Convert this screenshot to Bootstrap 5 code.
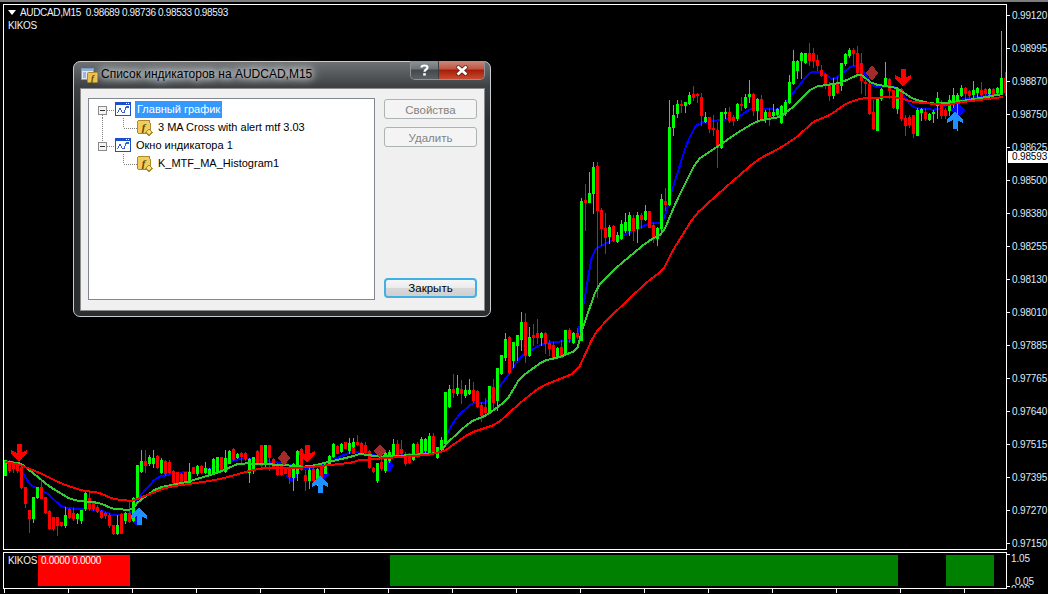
<!DOCTYPE html>
<html lang="ru">
<head>
  <meta charset="UTF-8" />
  <title>AUDCAD,M15</title>
  <link href="https://cdn.jsdelivr.net/npm/bootstrap@5.3.2/dist/css/bootstrap.min.css" rel="stylesheet" />
  <style>
    html, body { height: 594px; overflow: hidden; }
    body { background: #000; font-family: "Liberation Sans", Arial, sans-serif; font-size: 10px; line-height: 13px; letter-spacing: -0.15px; }

    .top-strip { height: 2px; background: #7d7d7d; }
    .terminal { padding: 2px 0 0 3px; }
    .price-pane { height: 546px; border: 1px solid #fff; position: relative; }
    .price-svg { display: block; width: 1002px; height: 544px; }
    .sub-pane { height: 37px; margin-top: 2px; border: 1px solid #fff; position: relative; padding: 2px 0; }
    .pane-col { width: 1004px; flex: none; }
    .axis-col { flex: 1 1 0; position: relative; color: #d8ecff; }
    .axis-main { height: 546px; padding: 5px 0 0; }
    .axis-sub { height: 37px; margin-top: 2px; overflow: hidden; position: relative; }
    .axis-row { height: 13px; }
    .axis-row::before { content: ""; width: 3px; height: 1px; background: #fff; margin-right: 2px; flex: none; }
    .sub-row-a::before { align-self: flex-start; margin-top: 2px; margin-right: 1px; }
    .sub-row-b { margin-top: 10px; }
    .sub-row-b::before { align-self: flex-start; margin-top: 11px; margin-right: 5px; }
    .price-tag { position: absolute; left: 1px; top: 147px; width: 41px; height: 12px; background: #fff; color: #000; padding-left: 4px; line-height: 12px; }
    .axis-ghost { position: absolute; left: 4px; top: 31px; height: 5px; overflow: hidden; line-height: 13px; }

    .pane-legend { position: absolute; left: 4px; top: 1px; color: #e6f2ff; line-height: 13px; letter-spacing: -0.35px; }
    .legend-row { height: 13px; }
    .legend-text { white-space: pre; }
    .legend-tri { width: 0; height: 0; border-left: 4px solid transparent; border-right: 4px solid transparent; border-top: 5px solid #fff; margin-right: 4px; }
    .sub-legend { position: absolute; left: 4px; top: 1px; color: #e6f2ff; white-space: nowrap; letter-spacing: -0.3px; }
    .sub-legend-name { display: inline-block; width: 33px; }
    .sub-legend-vals { color: #fff; }

    .hist-gap-a { width: 34px; }
    .hist-gap-b { width: 260px; }
    .hist-gap-c { width: 48px; }
    .hist-red { width: 92px; background: #f00; }
    .hist-green-a { width: 508px; background: #008000; }
    .hist-green-b { width: 48px; background: #008000; }

    .time-axis { padding-left: 1px; height: 4px; }
    .time-tick { width: 1px; height: 4px; background: #fff; margin-right: 63px; flex: none; }

    .mt-dialog { position: absolute; left: 73px; top: 61px; width: 418px; height: 256px; border: 1px solid #c9cdd0; border-radius: 7px; background: linear-gradient(to bottom, #6d7174 0, #3e4245 24px, #2b2e30 60px, #2b2e30 100%); padding: 0 5px 5px 6px; box-shadow: 0 0 0 1px #000; letter-spacing: 0; }
    .dlg-title { height: 26px; }
    .dlg-title-icon { width: 17px; height: 16px; margin: 5px 3px 0 1px; flex: none; }
    .dlg-title-text { font-size: 12px; line-height: 24px; color: #000; text-shadow: 0 0 6px #fff, 0 0 10px #fff, 0 0 14px rgba(255,255,255,.9); white-space: nowrap; }
    .win-btns { height: 19px; border: 1px solid #8f9396; border-top: 0; border-radius: 0 0 5px 5px; overflow: hidden; width: 75px; margin-top: -1px; flex: none; }
    .win-help { width: 28px; background: linear-gradient(to bottom, #8e9498 0, #6d7277 45%, #43484c 50%, #5a6064 100%); border-right: 1px solid #3d3d3d; }
    .win-close { flex: 1 1 0; background: linear-gradient(to bottom, #c98a7c 0, #bf5440 45%, #a51c08 50%, #c94a30 100%); }
    .dlg-client { height: 223px; background: #f0f0f0; border: 1px solid #8c8c8c; padding: 9px 7px 11px; }
    .tree-box { width: 287px; height: 202px; background: #fff; border: 1px solid #828790; padding-top: 1px; font-size: 11px; color: #000; flex: none; }
    .tree-line { height: 18px; }
    .tree-svg { flex: none; display: block; height: 18px; }
    .tree-sel { background: #3399ff; color: #fff; padding: 0 2px; line-height: 17px; height: 17px; }
    .tree-lbl { padding: 0 1px; white-space: nowrap; }
    .dlg-side { width: 93px; margin-left: 9px; margin-top: 1px; height: 199px; }
    .dlg-btn { display: block; width: 93px; height: 20px; padding: 1px 0 0; font-size: 11.5px; line-height: 16px; border-radius: 3px; border: 1px solid #adb2b5; background: #f4f4f4; color: #838383; }
    .dlg-btn:disabled { border-color: #adb2b5; background: #f4f4f4; color: #838383; opacity: 1; }
    .dlg-btn-main { color: #000; border: 2px solid #41b0e4; border-radius: 4px; padding-top: 0; background: linear-gradient(to bottom, #f6f6f6 0, #ebebeb 48%, #d8d8d8 52%, #cfcfcf 100%); }
    .dlg-btn-main:hover { color: #000; border-color: #41b0e4; }
  </style>
</head>
<body class="m-0">
  <div class="top-strip"></div>
  <div class="terminal">
    <div class="d-flex">
      <div class="pane-col">
        <div class="price-pane">
          <svg class="price-svg" id="priceChart" viewBox="4 5 1002 544" shape-rendering="crispEdges"></svg>
          <div class="pane-legend">
            <div class="legend-row d-flex align-items-center"><span class="legend-tri"></span><span class="legend-text">AUDCAD,M15  0.98689 0.98736 0.98533 0.98593</span></div>
            <div class="legend-row">KIKOS</div>
          </div>
        </div>
        <div class="sub-pane d-flex">
          <div class="hist-gap-a"></div>
          <div class="hist-red"></div>
          <div class="hist-gap-b"></div>
          <div class="hist-green-a"></div>
          <div class="hist-gap-c"></div>
          <div class="hist-green-b"></div>
          <div class="sub-legend"><span class="sub-legend-name">KIKOS</span><span class="sub-legend-vals">0.0000 0.0000</span></div>
        </div>
        <div class="time-axis d-flex" id="timeAxis"></div>
      </div>
      <div class="axis-col">
        <div class="axis-main d-flex flex-column justify-content-between" id="priceAxis"></div>
        <div class="price-tag">0.98593</div>
        <div class="axis-sub">
          <div class="axis-row sub-row-a d-flex align-items-center">1.05</div>
          <div class="axis-row sub-row-b d-flex align-items-center">0.05</div>
          <div class="axis-ghost">0.00</div>
        </div>
      </div>
    </div>
  </div>

  <svg width="0" height="0" class="position-absolute">
    <defs>
      <symbol id="icoChart" viewBox="0 0 16 14">
        <rect x="0.5" y="0.5" width="15" height="13" fill="#fff" stroke="#1c50c8"/>
        <rect x="0" y="0" width="16" height="3" fill="#1c50c8"/>
        <rect x="11" y="1" width="1" height="1" fill="#fff"/><rect x="13" y="1" width="1" height="1" fill="#fff"/>
        <path d="M2.5 11 L5 6 L7 10 L9 11 L11 5 L13.5 5" fill="none" stroke="#3060d0" stroke-width="1.2"/>
      </symbol>
      <symbol id="icoFunc" viewBox="0 0 16 16">
        <rect x="0.5" y="0.5" width="12.5" height="13" rx="2" fill="#f2cd5c" stroke="#a98a2c"/>
        <text x="6.6" y="10.5" text-anchor="middle" font-family="Liberation Serif, serif" font-style="italic" font-weight="700" font-size="11" fill="#5c4708">f</text>
        <path d="M12 9 L15.5 12.2 L12 15.5 L8.7 12.2 Z" fill="#f6dc84" stroke="#a98a2c"/>
      </symbol>
    </defs>
  </svg>

  <div class="mt-dialog d-flex flex-column">
    <div class="dlg-title d-flex">
      <svg class="dlg-title-icon" viewBox="0 0 17 16">
        <rect x="0.5" y="1.5" width="12" height="11" fill="#dfe8f4" stroke="#7f9cc4"/>
        <rect x="1" y="2" width="11" height="2" fill="#8fb0dc"/>
        <path d="M2 6h3M2 8h3M2 10h3" stroke="#6a86ac"/>
        <rect x="6.5" y="5.5" width="10" height="10" rx="1" fill="#eec04a" stroke="#a98a2c"/>
        <text x="11.5" y="13.5" text-anchor="middle" font-family="Liberation Serif, serif" font-style="italic" font-weight="700" font-size="9" fill="#5c4708">f</text>
      </svg>
      <div class="dlg-title-text">Список индикаторов на AUDCAD,M15</div>
      <div class="win-btns d-flex ms-auto">
        <div class="win-help d-flex align-items-center justify-content-center">
          <svg width="9" height="12" viewBox="0 0 9 12"><path d="M1.5 3.5 C1.5 0.8 7.5 0.8 7.5 3.5 C7.5 5.5 4.5 5.5 4.5 7.8" fill="none" stroke="#fff" stroke-width="2.2"/><rect x="3.2" y="9.2" width="2.6" height="2.4" fill="#fff"/></svg>
        </div>
        <div class="win-close d-flex align-items-center justify-content-center">
          <svg width="14" height="11" viewBox="0 0 14 11"><path d="M2 1 L12 10 M12 1 L2 10" stroke="#5a2018" stroke-width="4.2"/><path d="M2.5 1.5 L11.5 9.5 M11.5 1.5 L2.5 9.5" stroke="#fff" stroke-width="2.8"/></svg>
        </div>
      </div>
    </div>
    <div class="dlg-client d-flex">
      <ul class="tree-box list-unstyled mb-0">
        <li class="tree-line d-flex align-items-center">
          <svg class="tree-svg" width="46" viewBox="0 0 46 18" shape-rendering="crispEdges">
            <path d="M13.5 15V18M18 10.5H26" stroke="#808080" stroke-dasharray="1 1" fill="none"/>
            <rect x="9.5" y="6.5" width="8" height="8" fill="#f4f4f4" stroke="#8a8a8a"/><path d="M11 10.5H16" stroke="#333"/>
            <use href="#icoChart" x="26" y="2" width="16" height="14"/>
          </svg>
          <span class="tree-sel">Главный график</span>
        </li>
        <li class="tree-line d-flex align-items-center">
          <svg class="tree-svg" width="68" viewBox="0 0 68 18" shape-rendering="crispEdges">
            <path d="M13.5 0V18M34.5 0V10M35 10.5H48" stroke="#808080" stroke-dasharray="1 1" fill="none"/>
            <use href="#icoFunc" x="48" y="2" width="16" height="16"/>
          </svg>
          <span class="tree-lbl">3 MA Cross with alert mtf 3.03</span>
        </li>
        <li class="tree-line d-flex align-items-center">
          <svg class="tree-svg" width="46" viewBox="0 0 46 18" shape-rendering="crispEdges">
            <path d="M13.5 0V6M18 10.5H26" stroke="#808080" stroke-dasharray="1 1" fill="none"/>
            <rect x="9.5" y="6.5" width="8" height="8" fill="#f4f4f4" stroke="#8a8a8a"/><path d="M11 10.5H16" stroke="#333"/>
            <use href="#icoChart" x="26" y="2" width="16" height="14"/>
          </svg>
          <span class="tree-lbl">Окно индикатора 1</span>
        </li>
        <li class="tree-line d-flex align-items-center">
          <svg class="tree-svg" width="68" viewBox="0 0 68 18" shape-rendering="crispEdges">
            <path d="M34.5 0V10M35 10.5H48" stroke="#808080" stroke-dasharray="1 1" fill="none"/>
            <use href="#icoFunc" x="48" y="2" width="16" height="16"/>
          </svg>
          <span class="tree-lbl">K_MTF_MA_Histogram1</span>
        </li>
      </ul>
      <div class="dlg-side d-flex flex-column gap-2">
        <button type="button" class="btn dlg-btn" disabled>Свойства</button>
        <button type="button" class="btn dlg-btn" disabled>Удалить</button>
        <button type="button" class="btn dlg-btn dlg-btn-main mt-auto">Закрыть</button>
      </div>
    </div>
  </div>

  <script>
    // rows read off the chart: colour, wick top, body top, body bottom, wick bottom (zoomed y)
    const groups = [
      { x: 5, oy: 430, rows: "g 90 90 135 135|r 90 92 120 125|r 92 95 115 125|r 95 98 120 125|r 105 110 170 175|r 170 172 220 230|r 240 240 265 305|g 200 200 265 275|g 170 172 200 205|r 150 172 205 205|r 200 202 245 250|r 240 242 295 298|r 260 262 295 300|r 262 262 285 315|r 275 277 285 288|g 230 255 285 290|r 235 238 262 265|r 230 250 265 270|g 250 252 265 280|g 240 240 270 278|g 185 190 235 240|r 185 205 235 240|r 215 218 235 240|r 225 232 242 245|r 240 242 262 265|r 245 248 255 265|r 250 255 285 290|r 285 285 310 312|g 255 285 310 312|r 250 252 308 310|g 245 250 270 280|r 215 250 272 275|g 200 205 270 272|g 105 105 205 205|g 60 92 122 125|r 60 92 105 125|g 75 80 100 105|g 60 85 100 110|r 75 78 110 115|g 85 90 125 130|r 90 92 130 135|r 90 95 125 130|r 120 122 155 160|r 125 127 155 160|r 130 132 155 160|r 125 127 150 155|g 100 125 155 157|r 110 112 128 130|g 105 108 130 135|r 105 108 125 130|g 95 115 125 130|g 115 117 128 130|g 85 88 128 130|g 80 82 122 125|r 80 82 118 120|g 60 85 122 125|g 60 62 98 100|r 55 58 88 90|g 70 72 82 85|r 65 70 78 100|r 65 70 85 90|g 85 88 125 155|g 80 82 118 130|r 60 62 98 100|r 45 46 105 110|g 45 46 100 110|r 45 46 80 120|r 85 88 108 110|r 100 102 132 135|r 105 108 132 135|r 110 112 128 130|r 110 112 138 160|g 100 102 140 180|g 60 62 130 150|r 55 58 118 120|r 120 135 150 180|g 115 120 150 175|r 115 116 150 160|g 115 116 155 165|r 110 112 148 150|g 100 102 128 130|g 75 78 103 105|g 40 42 78 80|r 45 47 68 70|g 40 42 63 65|r 35 37 53 55|g 25 40 60 70|r 40 42 68 70" },
      { x: 353, oy: 300, rows: "g 415 425 437 440|r 405 425 432 435|r 425 428 455 460|r 425 435 455 460|r 450 452 500 505|r 500 503 512 515|g 488 490 540 545|r 460 485 505 510|g 455 460 510 515|g 450 455 480 485|g 418 432 462 465|r 420 432 465 470|r 420 448 460 465|r 455 462 490 495|r 460 465 485 490|g 430 432 478 480|r 425 432 468 470|g 410 418 458 460|g 415 418 450 455|g 400 408 458 460|r 398 408 460 462|g 440 442 470 475|g 410 420 448 450|g 275 275 430 435|g 255 268 318 320|r 222 268 275 290|g 225 265 280 285|r 240 268 280 310|g 255 270 285 290|g 238 270 280 282|r 245 270 300 305|r 270 272 318 320|r 305 315 345 362|r 295 320 335 345|g 258 258 335 337|r 238 262 305 330|g 205 205 300 330|g 165 165 220 222|g 100 118 170 180|r 108 110 215 220|g 125 127 180 200|g 105 105 135 180|g 35 65 118 150|r 40 65 165 185|g 80 110 165 167|r 72 105 112 135|r 58 100 112 130|g 95 98 110 135|r 95 98 130 160|r 120 130 145 165|r 125 135 170 172|g 140 143 172 175|r 120 140 170 172|g 90 90 160 165|r 85 90 115 125|g 95 98 125 130|r 85 98 108 115" },
      { x: 581, oy: 80, rows: "g 355 362 780 780|r 312 360 367 450|g 275 340 365 367|g 245 262 340 400|r 245 258 390 650|r 385 390 445 495|r 400 445 470 520|g 435 440 468 488|r 435 437 480 482|g 455 465 483 485|g 420 432 475 478|g 400 425 450 455|g 395 405 450 465|r 405 415 450 480|g 395 405 445 487|r 400 405 418 445|g 375 392 418 420|r 392 393 440 442|r 430 435 475 487|g 440 445 475 495|g 343 358 445 450|r 325 363 372 390|g 60 140 372 375|g 75 105 140 165|g 60 72 100 110|r 60 72 75 95|g 65 66 75 95|g 35 45 70 72|r 18 42 50 60|r 40 42 45 65|r 40 50 105 135|g 95 110 122 125|r 110 111 145 155|r 105 143 148 165|r 125 150 200 260|g 95 96 200 205|g 85 95 100 115|r 80 97 120 125|r 105 110 120 135|g 70 71 115 120|r 50 72 75 90|g 42 50 80 85|g 0 42 47 65|r 40 42 90 105|g 55 56 90 120|r 45 58 115 116|g 90 95 115 125|r 85 95 108 135|g 72 95 105 110|g 85 88 102 105" },
      { x: 781, oy: 20, rows: "g 255 258 305 310|g 240 245 280 285|g 165 185 245 250|g 90 122 190 192|g 120 122 150 175|g 95 98 120 175|g 98 100 125 130|r 70 98 120 135|r 85 100 120 140|r 105 120 135 150|r 135 150 165 167|r 160 161 195 205|r 185 195 225 240|g 175 195 225 235|r 170 185 215 220|g 128 130 195 210|g 100 102 130 135|g 85 90 105 110|r 85 90 100 135|r 78 100 155 160|r 100 130 180 220|r 180 185 190 225|r 190 191 280 282|r 240 275 325 327|g 230 232 330 331|g 205 207 235 240|g 125 175 195 197|r 175 176 210 235|r 210 211 260 265|g 200 205 265 280|r 205 206 295 300|r 285 295 315 345|r 285 290 312 320|r 285 286 340 350|g 265 270 345 346|g 265 266 275 300|r 265 275 295 300|g 280 282 298 300|g 270 275 280 305|g 215 235 255 295|r 240 250 285 295|r 265 270 285 295|g 225 240 270 285|g 205 225 240 260|g 220 225 240 330|g 195 205 225 227|r 200 205 220 245|r 210 212 225 240|g 182 210 222 230|g 200 205 215 230|r 185 210 222 235|r 205 207 220 225|g 205 208 220 230|r 205 207 222 230|g 200 205 215 225|g 33 175 215 217|r 155 175 215 225" }
    ];

    const blue = "5,460 23,473 30,485 47,493 63,508 100,510 115,516 132,513 138,498 157,477 177,473 207,470 240,458 283,463 307,470 327,463 350,452 367,453 383,458 440,450 447,433 457,417 472,403 487,403 507,377 520,357 543,343 577,340 583,307 593,250 613,240 650,223 663,223 673,187 687,143 697,123 737,118 752,108 780,110 793,93 810,72 823,72 833,80 853,65 863,70 873,87 897,87 913,108 937,110 957,100 1003,93";
    const green = "5,462 20,463 33,473 50,487 72,500 100,503 113,509 132,510 138,502 157,488 187,482 217,473 240,463 283,465 307,467 350,457 360,454 383,457 440,453 447,443 470,422 487,415 507,400 520,378 543,361 560,357 577,350 582,330 597,287 617,267 647,242 663,233 677,200 697,160 717,147 737,133 757,121 780,117 793,107 813,87 840,83 860,74 873,84 897,88 913,99 933,104 957,102 1003,94";
    const red = "5,462 20,465 40,473 60,483 80,490 100,493 113,499 132,501 140,498 167,487 217,480 260,468 300,468 350,463 360,460 440,454 470,433 497,424 520,403 540,387 577,372 595,333 610,317 647,282 663,270 673,250 695,215 717,195 757,160 780,148 797,137 813,122 830,115 847,103 863,98 897,97 913,102 947,105 963,102 1003,97";

    // one pass of corner cutting so the averages don't look like straight segments
    function smooth(str) {
      const p = str.split(" ").map(s => s.split(",").map(Number));
      const out = [p[0]];
      for (let i = 0; i < p.length - 1; i++) {
        const [a, b] = [p[i], p[i + 1]];
        out.push([a[0] * .85 + b[0] * .15, a[1] * .85 + b[1] * .15]);
        out.push([a[0] * .15 + b[0] * .85, a[1] * .15 + b[1] * .85]);
      }
      out.push(p[p.length - 1]);
      return out.map(q => q.join(",")).join(" ");
    }

    const arrowDown = (x, y) => `<polygon fill="#f00" points="${x-2.5},${y} ${x+2.5},${y} ${x+2.5},${y+9} ${x+8},${y+6} ${x+8},${y+9} ${x},${y+18} ${x-8},${y+9} ${x-8},${y+6} ${x-2.5},${y+9}"/>`;
    const arrowUp = (x, y) => `<polygon fill="#1e90ff" points="${x-2.5},${y} ${x+2.5},${y} ${x+2.5},${y-9} ${x+8},${y-6} ${x+8},${y-9} ${x},${y-18} ${x-8},${y-9} ${x-8},${y-6} ${x-2.5},${y-9}"/>`;
    const diamond = (x, y, rx, ry, col) => `<polygon fill="${col}" points="${x},${y-ry} ${x+rx},${y} ${x},${y+ry} ${x-rx},${y}"/>`;

    let html = "";
    html += `<polyline points="${smooth(blue)}" fill="none" stroke="#00f" stroke-width="2"/>`;
    html += diamond(323, 474, 7, 6, "#00f") + diamond(292, 476, 6, 7, "#00f") + diamond(389, 466, 5, 7, "#00f") + diamond(958, 110, 7, 8, "#00f") + diamond(136, 519, 5, 7, "#00f");

    groups.forEach(g => {
      g.rows.split("|").forEach((row, i) => {
        const [c, hi, top, bot, lo] = row.split(" ");
        const col = c === "g" ? "#0f0" : "#f00";
        const x = g.x + i * 4;
        const y = v => g.oy + Math.round(v / 3);
        html += `<rect x="${x}" y="${y(hi)}" width="1" height="${y(lo) - y(hi) + 1}" fill="${col}"/>`;
        html += `<rect x="${x - 1}" y="${y(top)}" width="3" height="${y(bot) - y(top) + 1}" fill="${col}"/>`;
      });
    });

    html += `<polyline points="${smooth(green)}" fill="none" stroke="#32cd32" stroke-width="2"/>`;
    html += `<polyline points="${smooth(red)}" fill="none" stroke="#f00" stroke-width="2"/>`;

    html += diamond(284, 458, 6, 8, "#a52a2a") + diamond(380, 451, 6, 7, "#a52a2a") + diamond(872, 73, 6, 8, "#a52a2a");
    html += arrowDown(19, 444) + arrowDown(307, 445) + arrowDown(903, 69);
    html += arrowUp(139, 525) + arrowUp(320, 493) + arrowUp(955, 129);
    document.getElementById("priceChart").innerHTML = html;

    const prices = ["0.99120","0.98995","0.98870","0.98750","0.98625","0.98500","0.98380","0.98255","0.98130","0.98010","0.97885","0.97765","0.97640","0.97515","0.97395","0.97270","0.97150"];
    document.getElementById("priceAxis").innerHTML = prices.map(p => `<div class="axis-row d-flex align-items-center">${p}</div>`).join("");

    let ticks = "";
    for (let i = 0; i < 16; i++) ticks += '<div class="time-tick"></div>';
    document.getElementById("timeAxis").innerHTML = ticks;
  </script>
  <script src="https://cdn.jsdelivr.net/npm/bootstrap@5.3.2/dist/js/bootstrap.bundle.min.js"></script>
</body>
</html>
